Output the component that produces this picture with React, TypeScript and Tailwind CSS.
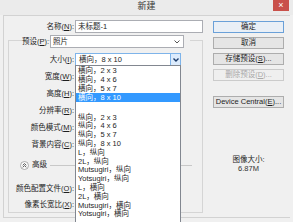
import React from "react";

function K({ children }: { children: React.ReactNode }) {
  return <span className="underline underline-offset-[1px]">{children}</span>;
}

function Chev({ color = "#444", bold = false }: { color?: string; bold?: boolean }) {
  return (
    <svg width="6" height="4" viewBox="0 0 6 4">
      <path d="M0.5 0.5 L3 3 L5.5 0.5" fill="none" stroke={color} strokeWidth={bold ? 1.4 : 1} />
    </svg>
  );
}

function Row({ label, h = "h-[17px]", mt = "" }: { label: React.ReactNode; h?: string; mt?: string }) {
  return (
    <div className={`${h} ${mt} flex items-center`}>
      <div className="w-[65px] text-right whitespace-nowrap">{label}</div>
    </div>
  );
}

const top4 = ["横向，2 x 3", "横向，4 x 6", "横向，5 x 7", "横向，8 x 10"];
const rest = [
  "纵向，2 x 3",
  "纵向，4 x 6",
  "纵向，5 x 7",
  "纵向，8 x 10",
  "L，纵向",
  "2L，纵向",
  "Mutsugiri，纵向",
  "Yotsugiri，纵向",
  "L，横向",
  "2L，横向",
  "Mutsugiri，横向",
  "Yotsugiri，横向",
];

export default function App() {
  return (
    <div className="w-[293px] h-[222px] bg-[#f0f0f0] overflow-hidden text-[#1e1e1e] text-[7.5px] leading-none font-[Liberation_Sans,Noto_Sans_CJK_SC,sans-serif]">
      {/* title bar */}
      <div className="h-[15px] grid grid-cols-[1fr_auto_1fr] items-start bg-[#ebebeb]">
        <div />
        <div className="text-[9px] pt-[2px] text-[#333]">新建</div>
        <div className="justify-self-end mr-[4px] w-[16px] h-[11px] bg-[#c9504a] text-white text-[9px] flex items-center justify-center">
          ×
        </div>
      </div>

      {/* body */}
      <div className="ml-[3px] mr-[3px] h-[203px] border-t border-l border-b border-[#d2d2d2] flex">
        {/* left column */}
        <div className="w-[201px] shrink-0 flex flex-col">
          {/* name */}
          <div className="mt-[4px] h-[13px] flex items-center">
            <div className="w-[70px] text-right whitespace-nowrap">
              名称(<K>N</K>):
            </div>
            <div className="ml-[1px] w-[128px] h-[13px] border border-[#abadb3] bg-white pl-[2px] flex items-center">
              未标题-1
            </div>
          </div>

          {/* group box */}
          <div className="ml-[4px] w-[195px] mt-[7px] h-[173px] border border-[#d5d5d5] flex flex-col">
            {/* preset */}
            <div className="-mt-[6px] h-[13px] flex items-stretch pl-[13px]">
              <div className="bg-[#f0f0f0] flex items-center whitespace-nowrap">
                预设(<K>P</K>):
              </div>
              <div className="ml-[1px] w-[134px] border border-[#abadb3] bg-white pl-[2px] pr-[3px] flex items-center justify-between">
                <span>照片</span>
                <Chev color="#555" />
              </div>
              <div className="w-[6px] bg-[#f0f0f0]" />
            </div>

            {/* size with open list */}
            <div className="mt-[5px] h-[13px] flex items-stretch">
              <div className="w-[65px] text-right whitespace-nowrap flex items-center justify-end">
                大小(<K>I</K>):
              </div>
              <div className="relative ml-[1px] w-[106px] border border-[#7eb4ea] bg-white flex items-stretch">
                <div className="flex-1 pl-[3px] flex items-center">横向，8 x 10</div>
                <div className="w-[10px] bg-[#dcebfc] border-l border-[#7eb4ea] flex items-center justify-center">
                  <Chev color="#1a3a6a" bold />
                </div>
                {/* dropdown list */}
                <div className="absolute z-10 top-full -left-[1px] w-[106px] h-[170px] bg-white border border-[#828790] flex flex-col">
                  {top4.map((t, i) => (
                    <div
                      key={t}
                      className={`h-[9px] shrink-0 pl-[2px] flex items-center whitespace-nowrap ${
                        i === 3 ? "bg-[#3399ff] text-white" : ""
                      }`}
                    >
                      {t}
                    </div>
                  ))}
                  <div className="h-[11px] shrink-0" />
                  {rest.map((t) => (
                    <div key={t} className="h-[8.8px] shrink-0 pl-[2px] flex items-center whitespace-nowrap">
                      {t}
                    </div>
                  ))}
                </div>
              </div>
            </div>

            <div className="mt-[2px]" />
            <Row label={<>宽度(<K>W</K>):</>} />
            <Row label={<>高度(<K>H</K>):</>} />
            <Row label={<>分辨率(<K>R</K>):</>} />
            <Row label={<>颜色模式(<K>M</K>):</>} />
            <Row label={<>背景内容(<K>C</K>):</>} />

            {/* advanced */}
            <div className="mt-[4px] h-[16px] flex items-center pl-[11px]">
              <svg width="9" height="9" viewBox="0 0 9 9">
                <circle cx="4.5" cy="4.5" r="4" fill="#fafafa" stroke="#9a9a9a" strokeWidth="0.8" />
                <path d="M2.7 4.3 L4.5 2.6 L6.3 4.3 M2.7 6.3 L4.5 4.6 L6.3 6.3" fill="none" stroke="#333" strokeWidth="0.8" />
              </svg>
              <span className="ml-[3px]">高级</span>
              <div className="ml-[3px] flex-1 h-px bg-[#c8c8c8] mr-[10px]" />
            </div>

            <Row mt="mt-[7px]" label={<>颜色配置文件(<K>O</K>):</>} />
            <Row mt="mt-[1px]" h="h-[14px]" label={<>像素长宽比(<K>X</K>):</>} />
          </div>
        </div>

        {/* right column */}
        <div className="ml-[8px] w-[71px] pt-[5px] flex flex-col">
          <div className="h-[12px] border border-[#6aa0d8] bg-[#e9eff6] flex items-center justify-center">确定</div>
          <div className="mt-[4px] h-[12px] border border-[#adadad] bg-[#e5e5e5] flex items-center justify-center">取消</div>
          <div className="mt-[4px] h-[12px] border border-[#adadad] bg-[#e5e5e5] flex items-center justify-center">
            存储预设(<K>S</K>)...
          </div>
          <div className="mt-[4px] h-[12px] border border-[#cbcbcb] bg-[#efefef] text-[#a8a8a8] flex items-center justify-center">
            删除预设(<K>D</K>)...
          </div>
          <div className="mt-[15px] h-[12px] border border-[#adadad] bg-[#e5e5e5] flex items-center justify-center whitespace-nowrap">
            Device Central(<K>E</K>)...
          </div>
          <div className="mt-[47px] h-[9px] flex items-center justify-center">图像大小:</div>
          <div className="h-[9px] flex items-center justify-center text-[#333]">6.87M</div>
        </div>
      </div>
    </div>
  );
}
